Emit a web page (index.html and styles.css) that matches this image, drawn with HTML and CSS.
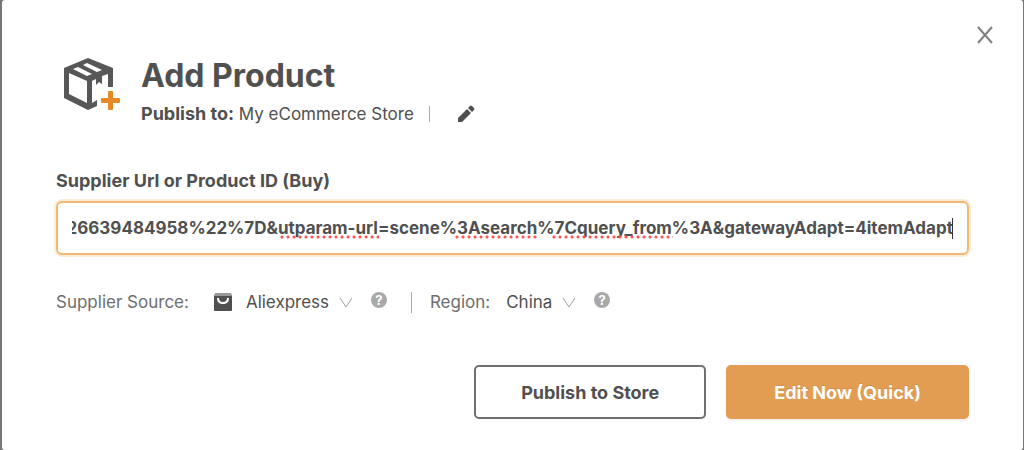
FILE: index.html
```
<!DOCTYPE html>
<html lang="en">

<head>
    <meta charset="UTF-8">
    <meta name="viewport" content="width=device-width, initial-scale=1.0">
    <title>Add Product</title>
    <link rel="stylesheet" href="styles.css">
</head>

<body>
    <form class="dialog" role="dialog" aria-labelledby="dialog-title">
        <button class="close" type="button" aria-label="Close">
            <svg width="16" height="18" viewBox="0 0 16 18">
                <path d="M1 1l14 16M15 1L1 17" />
            </svg>
        </button>

        <header class="header">
            <svg class="box-icon" width="60" height="56" viewBox="4 4 60 56" aria-hidden="true">
                <path class="box-line" fill-rule="evenodd" d="M32 8L57 18V37H52V24L46 26V34L43 32L40 35V29L36 31V53L41 50V56L32 60L8 48V18ZM13 23V44L31 53V31ZM17 19L31 26L36 24L22 17ZM27 15L41 22L46 20L31 13Z" />
                <path class="plus" d="M53 41h3q1 0 1 1v6h6q1 0 1 1v3q0 1-1 1h-6v6q0 1-1 1h-3q-1 0-1-1v-6h-6q-1 0-1-1v-3q0-1 1-1h6v-6q0-1 1-1z" />
            </svg>
            <div class="heading">
                <h1 class="title" id="dialog-title">Add Product</h1>
                <div class="store">
                    <span class="store-name"><b>Publish to:</b> My eCommerce Store</span>
                    <span class="divider"></span>
                    <button class="edit" type="button" aria-label="Change store">
                        <svg width="18" height="18" viewBox="0 0 18 18">
                            <path d="M1 17v-4L10 4l4 4L5 17zM11 3l2-2q1-1 2 0l2 2q1 1 0 2l-2 2z" />
                        </svg>
                    </button>
                </div>
            </div>
        </header>

        <label class="url-label" for="url">Supplier Url or Product ID (Buy)</label>
        <div class="url-box">
            <input class="url-input" id="url" type="text" spellcheck="false"
                value="%22%3A%226639484958%22%7D&amp;utparam-url=scene%3Asearch%7Cquery_from%3A&amp;gatewayAdapt=4itemAdapt">
            <div class="marks" aria-hidden="true">
                <span class="mark mark-param"></span>
                <span class="mark mark-search"></span>
                <span class="mark mark-query"></span>
            </div>
            <span class="caret"></span>
        </div>

        <div class="options">
            <label class="option-label" for="source">Supplier Source:</label>
            <svg class="shop-icon" width="18" height="18" viewBox="0 0 18 18" aria-hidden="true">
                <path class="shop-bag" d="M0 2h18v15q0 1-1 1H1q-1 0-1-1z" />
                <path class="shop-top" d="M1 0h16l1 3H0z" />
                <path class="shop-smile" d="M4 5q0 5 5 5t5-5" />
            </svg>
            <select class="select" id="source">
                <option>Aliexpress</option>
            </select>
            <button class="help" type="button" aria-label="About supplier source">?</button>
            <span class="divider tall"></span>
            <label class="option-label" for="region">Region:</label>
            <select class="select region" id="region">
                <option>China</option>
            </select>
            <button class="help" type="button" aria-label="About region">?</button>
        </div>

        <div class="actions">
            <button class="btn btn-outline" type="button">Publish to Store</button>
            <button class="btn btn-primary" type="submit">Edit Now (Quick)</button>
        </div>
    </form>

    <script>
        // keep the end of a long url in view
        const url = document.getElementById('url');
        url.focus();
        url.setSelectionRange(url.value.length, url.value.length);
        url.scrollLeft = url.scrollWidth;
    </script>
</body>

</html>
```
FILE: styles.css
```
* {
    box-sizing: border-box;
}

body {
    margin: 0;
    padding: 0 1px 0 2px;
    background-color: #777;
    color: #505050;
    font-family: Inter, "Liberation Sans", sans-serif;
    font-size: 18px;
}

button,
input,
select {
    font: inherit;
    color: inherit;
}

button {
    padding: 0;
    border: 0;
    background: none;
    cursor: pointer;
}

svg {
    display: block;
    flex: none;
}

.dialog {
    position: relative;
    min-height: 100vh;
    padding: 54px 54px 30px;
    background-color: #fff;
    border-radius: 3px;
}

.close {
    position: absolute;
    top: 26px;
    right: 30px;
}

.close path {
    fill: none;
    stroke: #808080;
    stroke-width: 2;
}

.header {
    display: flex;
    gap: 21px;
    padding-left: 4px;
}

.box-line {
    fill: #575757;
}

.plus {
    fill: #e68a27;
}

.title {
    margin: 0;
    font-size: 32px;
    line-height: 44px;
    font-weight: 700;
}

.store {
    display: flex;
    align-items: center;
    gap: 15px;
    line-height: 32px;
}

.store-name {
    font-size: 17px;
}

.store-name b {
    font-size: 18px;
}

.divider {
    width: 1px;
    height: 16px;
    background-color: #aaa;
}

.edit {
    margin-left: 12px;
}

.edit path {
    fill: #505050;
}

.url-label {
    display: block;
    margin-top: 36px;
    line-height: 30px;
    font-weight: 700;
}

.url-box {
    position: relative;
    margin-top: 5px;
}

.url-input {
    display: block;
    width: 100%;
    height: 54px;
    padding: 0 14px;
    border: 2px solid #efb874;
    border-radius: 6px;
    box-shadow: 0 0 0 2px #fbecd9;
    outline: 0;
    font-size: 17px;
    font-weight: 700;
    caret-color: transparent;
}

.marks {
    position: absolute;
    left: 0;
    right: 16px;
    top: 34px;
    display: flex;
    justify-content: flex-end;
}

.mark {
    height: 4px;
    background: radial-gradient(circle, #f55 1px, transparent 2px) 0 0 / 6px 4px;
}

.mark-param {
    width: 100px;
    margin-right: 75px;
}

.mark-search {
    width: 84px;
    margin-right: 13px;
}

.mark-query {
    width: 122px;
    margin-right: 280px;
}

.caret {
    position: absolute;
    top: 17px;
    right: 16px;
    width: 1px;
    height: 21px;
    background-color: #333;
}

.options {
    display: flex;
    align-items: center;
    margin-top: 32px;
    font-size: 17px;
}

.option-label {
    color: #6e6e6e;
}

.shop-icon {
    margin: 0 14px 0 25px;
}

.shop-bag {
    fill: #505050;
}

.shop-top {
    fill: #999;
}

.shop-smile {
    fill: none;
    stroke: #fff;
    stroke-width: 2;
}

.select {
    appearance: none;
    padding: 0 23px 0 0;
    border: 0;
    line-height: 30px;
    background: url("data:image/svg+xml,%3Csvg xmlns='http://www.w3.org/2000/svg' width='14' height='11'%3E%3Cpath d='M1 1l6 9 6-9' fill='none' stroke='%23a0a0a0'/%3E%3C/svg%3E") right center no-repeat;
}

.region {
    margin-left: 16px;
}

.help {
    width: 16px;
    height: 16px;
    margin: 0 0 4px 18px;
    border-radius: 50%;
    background-color: #a9a9a9;
    color: #fff;
    font-size: 13px;
    line-height: 16px;
    font-weight: 700;
}

.tall {
    height: 21px;
    margin: 0 18px 0 24px;
}

.actions {
    display: flex;
    justify-content: flex-end;
    gap: 20px;
    margin-top: 48px;
}

.btn {
    height: 54px;
    border-radius: 5px;
    font-weight: 700;
}

.btn-outline {
    padding: 0 45px;
    border: 2px solid #707070;
}

.btn-primary {
    padding: 0 48px;
    background-color: #e29d52;
    color: #fff;
    box-shadow: 0 2px 2px #f0f0f0;
    text-shadow: 0 -1px 0 #cf8e49;
}
```
